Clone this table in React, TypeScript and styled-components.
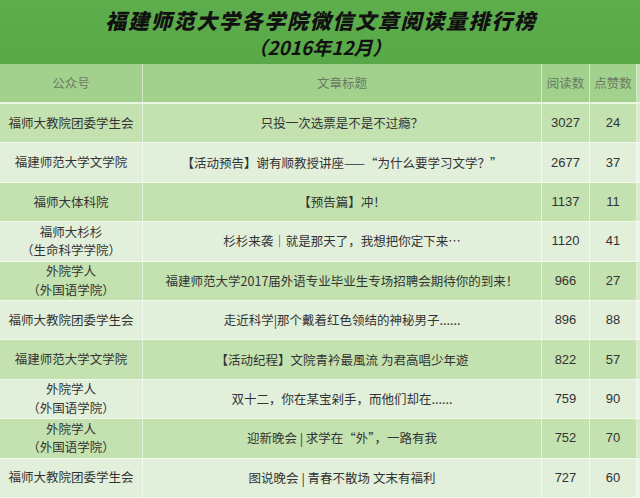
import React from "react";
import styled, { createGlobalStyle } from "styled-components";

const Global = createGlobalStyle`
  html, body { margin: 0; padding: 0; background: #ffffff; }
  body { width: 640px; height: 498px; overflow: hidden; }
`;

const Page = styled.div`
  width: 640px;
  height: 498px;
  display: flex;
  flex-direction: column;
  font-family: "Noto Sans CJK SC", "Liberation Sans", sans-serif;
  color: #333;
  background: #eef5ea;
`;

const TitleBar = styled.div`
  height: 64px;
  box-sizing: border-box;
  padding-top: 3px;
  background: linear-gradient(#5fae4d, #57a847);
  display: flex;
  flex-direction: column;
  align-items: center;
  justify-content: center;
  color: #111;
`;

const Title = styled.div`
  font-size: 21px;
  font-weight: 900;
  font-style: italic;
  letter-spacing: 1.7px;
  line-height: 26px;
  padding-left: 2px;
`;

const SubTitle = styled.div`
  font-size: 19px;
  font-weight: 700;
  font-style: italic;
  line-height: 26px;
  margin-top: 1px;
`;

const Row = styled.div<{ $tone: "head" | "dark" | "light" }>`
  display: grid;
  grid-template-columns: 143px 399px 48px 47px 3px;
  height: ${(p) => (p.$tone === "head" ? "40px" : "39.4px")};
  box-sizing: border-box;
  background: ${(p) =>
    p.$tone === "head" ? "#a2d18d" : p.$tone === "dark" ? "#c4e2b0" : "#e2efdb"};
  border-bottom: ${(p) =>
    p.$tone === "head" ? "2px solid #eaf5e4" : "1px solid #f1f8ee"};
  color: ${(p) => (p.$tone === "head" ? "#6a7a62" : "#333")};
`;

const Cell = styled.div<{ $num?: boolean }>`
  display: flex;
  flex-direction: column;
  align-items: center;
  justify-content: center;
  text-align: center;
  border-right: 1px solid rgba(255, 255, 255, 0.55);
  font-size: ${(p) => (p.$num ? "13px" : "12.5px")};
  font-family: ${(p) =>
    p.$num
      ? '"Liberation Sans", Arial, sans-serif'
      : '"Noto Sans CJK SC", "Liberation Sans", sans-serif'};
  line-height: 18px;
  white-space: nowrap;
  overflow: hidden;
`;

const Line = styled.span`
  display: block;
  line-height: 18.5px;
`;

const Edge = styled.div`
  background: rgba(255, 255, 255, 0.35);
`;

type Item = { acc: string[]; title: string; read: number; like: number };

const data: Item[] = [
  { acc: ["福师大教院团委学生会"], title: "只投一次选票是不是不过瘾？", read: 3027, like: 24 },
  { acc: ["福建师范大学文学院"], title: "【活动预告】谢有顺教授讲座——“为什么要学习文学？”", read: 2677, like: 37 },
  { acc: ["福师大体科院"], title: "【预告篇】冲！", read: 1137, like: 11 },
  { acc: ["福师大杉杉", "（生命科学学院）"], title: "杉杉来袭｜就是那天了，我想把你定下来…", read: 1120, like: 41 },
  { acc: ["外院学人", "（外国语学院）"], title: "福建师范大学2017届外语专业毕业生专场招聘会期待你的到来！", read: 966, like: 27 },
  { acc: ["福师大教院团委学生会"], title: "走近科学|那个戴着红色领结的神秘男子......", read: 896, like: 88 },
  { acc: ["福建师范大学文学院"], title: "【活动纪程】文院青衿最風流 为君高唱少年遊", read: 822, like: 57 },
  { acc: ["外院学人", "（外国语学院）"], title: "双十二，你在某宝剁手，而他们却在......", read: 759, like: 90 },
  { acc: ["外院学人", "（外国语学院）"], title: "迎新晚会 | 求学在“外”，一路有我", read: 752, like: 70 },
  { acc: ["福师大教院团委学生会"], title: "图说晚会 | 青春不散场 文末有福利", read: 727, like: 60 },
];

export default function App() {
  return (
    <Page>
      <Global />
      <TitleBar>
        <Title>福建师范大学各学院微信文章阅读量排行榜</Title>
        <SubTitle>（2016年12月）</SubTitle>
      </TitleBar>
      <Row $tone="head">
        <Cell>公众号</Cell>
        <Cell>文章标题</Cell>
        <Cell>阅读数</Cell>
        <Cell>点赞数</Cell>
        <Edge />
      </Row>
      {data.map((d, i) => (
        <Row key={i} $tone={i % 2 === 0 ? "dark" : "light"}>
          <Cell>
            {d.acc.map((a) => (
              <Line key={a}>{a}</Line>
            ))}
          </Cell>
          <Cell>{d.title}</Cell>
          <Cell $num>{d.read}</Cell>
          <Cell $num>{d.like}</Cell>
          <Edge />
        </Row>
      ))}
    </Page>
  );
}
